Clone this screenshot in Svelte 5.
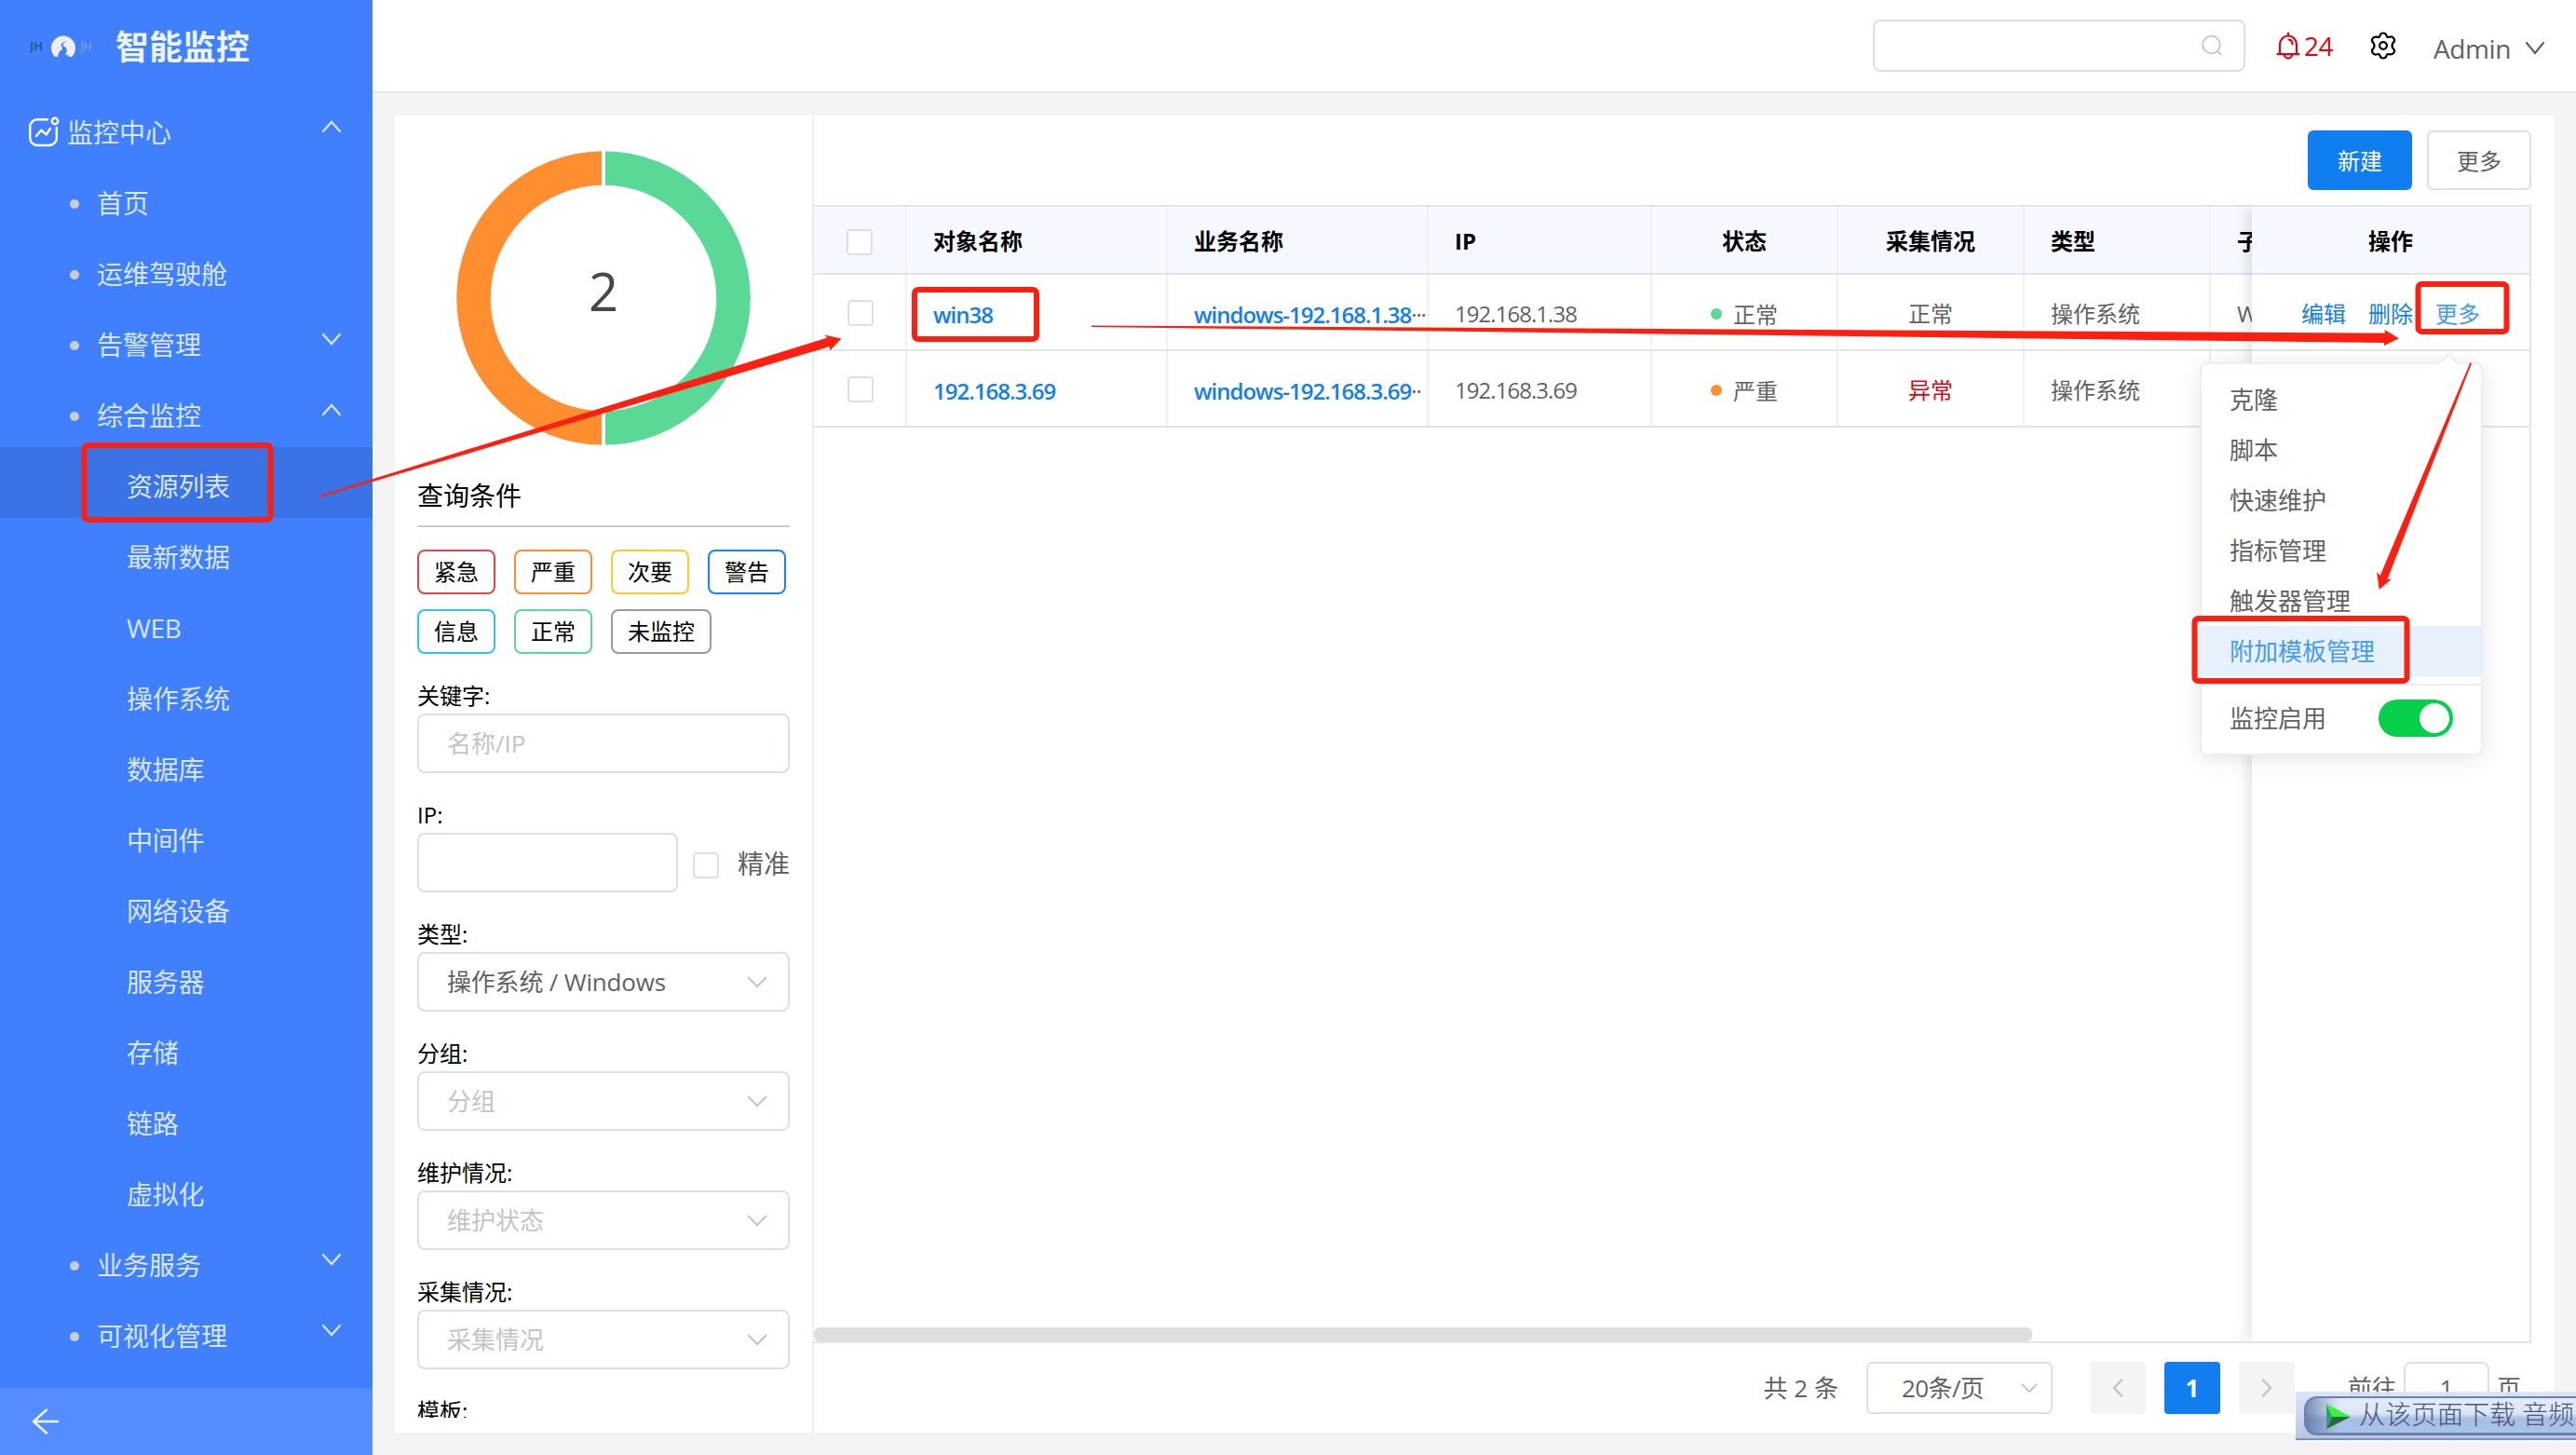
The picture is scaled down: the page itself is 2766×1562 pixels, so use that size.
<script>
  const menu = [
    { label: "首页", level: 1 },
    { label: "运维驾驶舱", level: 1 },
    { label: "告警管理", level: 1, arrow: "down" },
    { label: "综合监控", level: 1, arrow: "up" },
    { label: "资源列表", level: 2 },
    { label: "最新数据", level: 2 },
    { label: "WEB", level: 2 },
    { label: "操作系统", level: 2 },
    { label: "数据库", level: 2 },
    { label: "中间件", level: 2 },
    { label: "网络设备", level: 2 },
    { label: "服务器", level: 2 },
    { label: "存储", level: 2 },
    { label: "链路", level: 2 },
    { label: "虚拟化", level: 2 },
    { label: "业务服务", level: 1, arrow: "down" },
    { label: "可视化管理", level: 1, arrow: "down" }
  ];

  const levels = [
    { label: "紧急", color: "#e64545" },
    { label: "严重", color: "#ff8e30" },
    { label: "次要", color: "#ffcb29" },
    { label: "警告", color: "#1684fc" },
    { label: "信息", color: "#2bc4f5" },
    { label: "正常", color: "#59d896" },
    { label: "未监控", color: "#999999" }
  ];

  const selects = [
    { label: "类型:", text: "操作系统 / Windows", filled: true },
    { label: "分组:", text: "分组" },
    { label: "维护情况:", text: "维护状态" },
    { label: "采集情况:", text: "采集情况" }
  ];

  const rows = [
    { name: "win38", service: "windows-192.168.1.38", dots: "···", ip: "192.168.1.38", status: "正常", color: "#59d896", collect: "正常", type: "操作系统", sub: "W" },
    { name: "192.168.3.69", service: "windows-192.168.3.69", dots: "··", ip: "192.168.3.69", status: "严重", color: "#ff8e30", collect: "异常", type: "操作系统", sub: "" }
  ];

  const actions = ["克隆", "脚本", "快速维护", "指标管理", "触发器管理", "附加模板管理"];

  let activeMenu = "资源列表";
  let activeAction = "附加模板管理";
</script>

<div class="app">
  <aside class="sidebar">
    <div class="brand">
      <svg class="brand__logo" width="72" height="28" viewBox="0 0 72 28">
        <text x="0" y="18" class="logo-left">JH</text>
        <path fill="#eee" d="M27 25A13 13 0 1 1 45 25H42Q41 22 38 23Q42 16 37 14Q33 12 40 8Q32 10 34 14Q37 17 32 19Q30 22 30 25Z" />
        <text x="55" y="18" class="logo-right">JH</text>
      </svg>
      <span class="brand__title">智能监控</span>
    </div>

    <div class="menu__item menu__item--root">
      <svg class="menu__icon" width="34" height="34" viewBox="0 0 34 34" fill="none" stroke="#fff" stroke-width="2.4" stroke-linecap="round" stroke-linejoin="round">
        <path d="M20 3.2H9.2a8 8 0 0 0-8 8V23a8 8 0 0 0 8 8h12.6a8 8 0 0 0 8-8V12" />
        <circle cx="28" cy="5" r="3.2" />
        <path d="M8 21l5.2-6.2 5.6 4.6L23 13" />
      </svg>
      <span>监控中心</span>
      <svg class="menu__arrow" width="22" height="14" viewBox="0 0 22 14"><path d="M2 12L11 2L20 12" /></svg>
    </div>
    {#each menu as item}
      <div class="menu__item menu__item--level{item.level}" class:active={item.label === activeMenu}>
        {#if item.level === 1}<i class="menu__dot"></i>{/if}
        <span>{item.label}</span>
        {#if item.arrow}
          <svg class="menu__arrow" width="22" height="14" viewBox="0 0 22 14">
            <path d={item.arrow === "up" ? "M2 12L11 2L20 12" : "M2 2L11 12L20 2"} />
          </svg>
        {/if}
      </div>
    {/each}

    <div class="sidebar__footer">
      <svg width="30" height="28" viewBox="0 0 30 28" fill="none" stroke="#f2f6ff" stroke-width="2.4" stroke-linecap="round" stroke-linejoin="round">
        <path d="M28 14H2M16 1.5L2 14L16 26.5" />
      </svg>
    </div>
  </aside>

  <div class="page">
    <header class="topbar">
      <div class="search">
        <svg width="24" height="24" viewBox="0 0 24 24" fill="none" stroke="#c0c4cc" stroke-width="1.8" stroke-linecap="round">
          <circle cx="11.5" cy="11" r="9.3" /><path d="M18 18l4 3.6" />
        </svg>
      </div>
      <div class="alarm">
        <svg width="26" height="30" viewBox="0 0 26 30" fill="none" stroke="#e60012" stroke-width="2.2" stroke-linecap="round" stroke-linejoin="round">
          <path d="M13 1.5V4M1.5 24.2H24.500M4 24V14a9 9.500 0 0 1 18 0v10M9 25a4 3.600 0 0 0 8 0M13.500 8.500q4 .5 4 5" />
        </svg>
        <span>24</span>
      </div>
      <svg class="gear" width="30" height="30" viewBox="0 0 30 30" fill="none" stroke="#000" stroke-width="2.2" stroke-linejoin="round">
        <path d="M11.500 4.200Q12 1.500 15 1.500T18.500 4.200Q19 6.500 21.500 5.700Q25 4.700 26.500 7.500T25.500 12Q23.500 15 25.500 18Q28 20 26.500 22.500T21.500 24.300Q19 23.500 18.500 25.800Q18 28.500 15 28.500T11.500 25.800Q11 23.500 8.500 24.300Q5 25.300 3.500 22.500T4.500 18Q6.500 15 4.500 12Q2 10 3.500 7.500T8.500 5.700Q11 6.500 11.500 4.200Z" />
        <circle cx="15" cy="15" r="3.900" />
      </svg>
      <div class="user">
        <span>Admin</span>
        <svg width="22" height="16" viewBox="0 0 22 16" fill="none" stroke="#606266" stroke-width="2.2" stroke-linecap="round"><path d="M2 2l9 11 9-11" /></svg>
      </div>
    </header>

    <main class="card">
      <section class="filter">
        <svg class="ring" width="400" height="396" viewBox="0 0 400 396">
          <path d="M200 56.500a139.500 139.500 0 0 1 0 279" fill="none" stroke="#59d896" stroke-width="36.500" />
          <path d="M200 335.500a139.500 139.500 0 0 1 0-279" fill="none" stroke="#ff8e30" stroke-width="36.500" />
          <path d="M200 30V362" stroke="#fff" stroke-width="4" />
          <text x="200" y="210">2</text>
        </svg>

        <h3 class="filter__title">查询条件</h3>
        <div class="tags">
          {#each levels as level}
            <span class="tag" style="border-color: {level.color}">{level.label}</span>
          {/each}
        </div>

        <div class="field">
          <span class="field__label">关键字:</span>
          <div class="field__box">名称/IP</div>
        </div>
        <div class="field">
          <span class="field__label">IP:</span>
          <div class="field__row">
            <div class="field__box field__box--ip"></div>
            <i class="checkbox"></i>
            <span class="exact">精准</span>
          </div>
        </div>
        {#each selects as item}
          <div class="field">
            <span class="field__label">{item.label}</span>
            <div class="field__box" class:filled={item.filled}>
              <span>{item.text}</span>
              <svg width="22" height="13" viewBox="0 0 22 13" fill="none" stroke="#c0c4cc" stroke-width="2" stroke-linecap="round"><path d="M1.500 1.500L11 11L20.500 1.500" /></svg>
            </div>
          </div>
        {/each}
        <div class="field field--cut">
          <span class="field__label">模板:</span>
        </div>
      </section>

      <section class="content">
        <div class="toolbar">
          <button class="btn btn--primary">新建</button>
          <button class="btn">更多</button>
        </div>

        <div class="table">
          <div class="table__scroll">
            <div class="table__row table__row--head">
              <div class="cell cell--check"><i class="checkbox"></i></div>
              <div class="cell">对象名称</div>
              <div class="cell">业务名称</div>
              <div class="cell">IP</div>
              <div class="cell cell--center">状态</div>
              <div class="cell cell--center">采集情况</div>
              <div class="cell">类型</div>
              <div class="cell">子</div>
            </div>
            {#each rows as row}
              <div class="table__row">
                <div class="cell cell--check cell--body-check"><i class="checkbox"></i></div>
                <div class="cell"><a class="link">{row.name}</a></div>
                <div class="cell"><a class="link">{row.service}</a><span class="dots">{row.dots}</span></div>
                <div class="cell num">{row.ip}</div>
                <div class="cell cell--center">
                  <i class="status" style="background: {row.color}"></i><span class="status__text">{row.status}</span>
                </div>
                <div class="cell cell--center" class:danger={row.collect === "异常"}>{row.collect}</div>
                <div class="cell">{row.type}</div>
                <div class="cell">{row.sub}</div>
              </div>
            {/each}
            <div class="scrollbar"></div>
          </div>
          <div class="table__fixed">
            <div class="ops ops--head">操作</div>
            <div class="ops"><a>编辑</a><a>删除</a><a class="hover">更多</a></div>
            <div class="ops"></div>
          </div>
        </div>

        <div class="pager">
          <span>共 2 条</span>
          <div class="pager__size">
            <span>20条/页</span>
            <svg width="18" height="11" viewBox="0 0 18 11" fill="none" stroke="#c0c4cc" stroke-width="1.800" stroke-linecap="round"><path d="M1.500 1.500L9 9L16.500 1.500" /></svg>
          </div>
          <button class="pager__btn"><svg width="14" height="20" viewBox="0 0 14 20"><path d="M11 1.500L3 10L11 18.500" /></svg></button>
          <button class="pager__btn current">1</button>
          <button class="pager__btn"><svg width="14" height="20" viewBox="0 0 14 20"><path d="M3 1.500L11 10L3 18.500" /></svg></button>
          <span class="pager__goto">前往</span>
          <div class="pager__input">1</div>
          <span>页</span>
        </div>
      </section>
    </main>
  </div>

  <!-- row actions dropdown -->
  <div class="dropdown">
    <svg class="dropdown__tip" width="24" height="14" viewBox="0 0 24 14"><path d="M1 13L12 2L23 13" fill="#fff" stroke="#ebeef5" stroke-width="2" /></svg>
    {#each actions as action}
      <div class="dropdown__item" class:active={action === activeAction}>{action}</div>
    {/each}
    <div class="dropdown__switch">
      <span>监控启用</span>
      <i class="switch"></i>
    </div>
  </div>

  <div class="downloader">
    <div class="downloader__inner">
      <svg width="30" height="30" viewBox="0 0 30 30">
        <path d="M2 2L28 16L8 16Z" fill="#35f53a" />
        <path d="M8 16H28L2 29Z" fill="#27693a" />
        <path d="M2 2L8 16L2 29Z" fill="#3a9a72" />
      </svg>
      <span>从该页面下载 音频</span>
    </div>
  </div>

  <!-- step markers -->
  <svg class="marks" width="2766" height="1562" viewBox="0 0 2766 1562">
    <g fill="none" stroke="#ff1f10" stroke-width="6">
      <rect x="90.500" y="478" width="200" height="80" rx="4" />
      <rect x="982" y="311" width="131" height="53" rx="4" />
      <rect x="2596.500" y="305" width="95" height="51" rx="4" />
      <rect x="2356.500" y="664" width="228" height="67" rx="4" />
    </g>
    <g fill="#ff1f10">
      <path d="M343 532L888.500 362.500L885 359.500L903.500 363.500L891 376.500V372L343 534Z" />
      <path d="M1172 349.500L2561 357.500L2560.500 354L2576 363.200L2560 371V368L1172 351Z" />
      <path d="M2652.500 389L2555.700 618L2552 614L2554.700 633L2568 621.500L2563.500 622L2654 390Z" />
    </g>
  </svg>
</div>

<style>
  :global(body) {
    margin: 0;
  }

  .app {
    position: relative;
    display: flex;
    width: 2766px;
    height: 1562px;
    overflow: hidden;
    background: #f4f4f4;
    font-family: "Open Sans", "Noto Sans CJK SC", sans-serif;
    font-size: 24px;
    line-height: 36px;
    color: #606266;
  }

  .app * {
    box-sizing: border-box;
  }

  svg {
    flex-shrink: 0;
  }

  /* sidebar */
  .sidebar {
    display: flex;
    flex-direction: column;
    width: 400px;
    flex-shrink: 0;
    background: #4080ff;
    color: #d9e6ff;
    font-size: 28px;
  }

  .brand {
    display: flex;
    align-items: center;
    height: 100px;
    padding-left: 32px;
  }

  .logo-left {
    font: bold 13px "Open Sans", sans-serif;
    fill: #1b6196;
  }

  .logo-right {
    font: 300 12px "Open Sans", sans-serif;
    fill: #a3c0f5;
  }

  .brand__title {
    margin: 2px 0 0 20px;
    font-size: 36px;
    font-weight: bold;
    color: #ecf3ff;
    line-height: 50px;
  }

  .menu__item {
    display: flex;
    align-items: center;
    height: 76px;
    flex-shrink: 0;
    padding: 8px 33px 0 0;
  }

  .menu__item--root {
    padding-left: 31px;
  }

  .menu__icon {
    margin-right: 7px;
  }

  .menu__item--level1 {
    padding-left: 75px;
  }

  .menu__item--level2 {
    padding-left: 136px;
    letter-spacing: -0.3px;
  }

  .menu__item.active {
    background: #3a73e6;
  }

  .menu__dot {
    width: 10px;
    height: 10px;
    margin: 2px 19px 0 0;
    border-radius: 50%;
    background: #ccc;
  }

  .menu__arrow {
    margin: 0 0 12px auto;
    fill: none;
    stroke: #d9e6ff;
    stroke-width: 2.2;
    stroke-linecap: round;
  }

  .sidebar__footer {
    display: flex;
    align-items: center;
    height: 72px;
    margin-top: auto;
    padding-left: 34px;
    background: #538dff;
  }

  /* top bar */
  .page {
    flex: 1;
    display: flex;
    flex-direction: column;
  }

  .topbar {
    display: flex;
    align-items: center;
    justify-content: flex-end;
    height: 100px;
    padding-right: 33px;
    background: #fff;
    border-bottom: 2px solid #e6e6e6;
    font-size: 28px;
  }

  .search {
    display: flex;
    align-items: center;
    justify-content: flex-end;
    width: 400px;
    height: 56px;
    padding-right: 22px;
    border: 2px solid #dcdfe6;
    border-radius: 8px;
  }

  .alarm {
    display: flex;
    align-items: center;
    width: 62px;
    margin-left: 33px;
    gap: 4px;
    color: #e60012;
    letter-spacing: -0.6px;
  }

  .gear {
    margin-left: 38px;
  }

  .user {
    display: flex;
    align-items: center;
    justify-content: space-between;
    width: 120px;
    margin: 6px 0 0 39px;
    letter-spacing: -0.4px;
  }

  /* card */
  .card {
    flex: 1;
    display: flex;
    margin: 24px;
    background: #fff;
  }

  .filter {
    width: 450px;
    padding: 0 24px;
    border-right: 2px solid #ebeef5;
    color: #000;
  }

  .ring {
    display: block;
    width: 400px;
  }

  .ring text {
    font-size: 56px;
    fill: #464646;
    text-anchor: middle;
  }

  .filter__title {
    height: 46px;
    margin: 0 0 24px;
    border-bottom: 2px solid #ccc;
    font-size: 28px;
    font-weight: normal;
    line-height: 25px;
  }

  .tags {
    display: flex;
    flex-wrap: wrap;
    gap: 16px 20px;
    margin-right: -4px;
    margin-bottom: 28px;
  }

  .tag {
    height: 48px;
    padding: 0 16px;
    border: 2px solid;
    border-radius: 8px;
    line-height: 44px;
  }

  .field {
    height: 128px;
  }

  .field--cut {
    height: 24px;
    overflow: hidden;
  }

  .field__label {
    display: block;
    height: 36px;
    line-height: 34px;
  }

  .field__box {
    display: flex;
    align-items: center;
    justify-content: space-between;
    width: 400px;
    height: 64px;
    padding: 0 22px 0 30px;
    border: 2px solid #dcdfe6;
    border-radius: 8px;
    font-size: 26px;
    color: #c0c4cc;
  }

  .field__box.filled {
    color: #606266;
    letter-spacing: -0.2px;
  }

  .field__box--ip {
    width: 280px;
    margin-right: 16px;
  }

  .field__row {
    display: flex;
    align-items: center;
  }

  .checkbox {
    display: block;
    width: 28px;
    height: 28px;
    flex-shrink: 0;
    border: 2px solid #dcdfe6;
    border-radius: 4px;
    background: #fff;
  }

  .field__row .checkbox {
    margin-top: 6px;
  }

  .exact {
    margin: 2px 0 0 20px;
    font-size: 28px;
    color: #606266;
  }

  /* right side */
  .content {
    flex: 1;
    display: flex;
    flex-direction: column;
    min-width: 0;
  }

  .toolbar {
    display: flex;
    justify-content: flex-end;
    align-items: center;
    gap: 16px;
    height: 96px;
    padding-right: 24px;
  }

  .btn {
    width: 112px;
    height: 64px;
    padding: 2px 0 0;
    border: 2px solid #dcdfe6;
    border-radius: 6px;
    background: #fff;
    font: inherit;
    color: #606266;
  }

  .btn--primary {
    border-color: #107eef;
    background: #107eef;
    color: #fff;
  }

  .table {
    display: flex;
    height: 1222px;
    margin-right: 24px;
    border: solid #e4e4e4;
    border-width: 2px 2px 2px 0;
  }

  .table__scroll {
    display: flex;
    flex-direction: column;
    width: 1544px;
    overflow: hidden;
  }

  .table__row {
    display: grid;
    grid-template-columns: 100px 280px 280px 240px 200px 200px 200px 280px;
    height: 82px;
    border-bottom: 2px solid #e4e4e4;
  }

  .table__row--head {
    height: 73px;
    background: #f5f8ff;
    color: #000;
    font-weight: bold;
  }

  .cell {
    display: flex;
    align-items: center;
    padding: 3px 0 0 28px;
    border-right: 2px solid #f0f0f0;
    white-space: nowrap;
    overflow: hidden;
  }

  .cell--center {
    justify-content: center;
    padding: 3px 0 0;
  }

  .cell--check {
    justify-content: center;
    padding: 4px 0 0;
  }

  .cell--body-check {
    padding: 2px 0 0 2px;
  }

  .link {
    margin-top: 3px;
    font-weight: 600;
    color: #107eef;
    letter-spacing: -1px;
  }

  .dots {
    margin-top: 3px;
    letter-spacing: -1.2px;
  }

  .num {
    letter-spacing: -0.95px;
  }

  .status {
    width: 12px;
    height: 12px;
    margin-right: 12px;
    border-radius: 50%;
  }

  .status__text {
    margin-top: 3px;
  }

  .danger {
    color: #e60012;
  }

  .scrollbar {
    width: 1308px;
    height: 15px;
    margin-top: auto;
    border-radius: 6px;
    background: #dddee0;
  }

  .table__fixed {
    flex: 1;
    z-index: 1;
    background: #fff;
    box-shadow: -4px 0 16px rgba(0, 0, 0, 0.12);
    clip-path: inset(0 0 0 -30px);
  }

  .ops {
    display: flex;
    align-items: center;
    justify-content: center;
    gap: 24px;
    height: 82px;
    padding-top: 3px;
    border-bottom: 2px solid #e4e4e4;
    color: #107eef;
  }

  .ops--head {
    height: 73px;
    background: #f5f8ff;
    color: #000;
    font-weight: bold;
  }

  .ops .hover {
    color: #459bf2;
  }

  .pager {
    display: flex;
    align-items: center;
    justify-content: flex-end;
    height: 56px;
    margin: 20px 35px 0 0;
    font-size: 26px;
  }

  .pager__size {
    display: flex;
    align-items: center;
    justify-content: space-between;
    width: 200px;
    height: 56px;
    margin: 0 40px 0 30px;
    padding: 0 14px 0 36px;
    border: 2px solid #dcdfe6;
    border-radius: 6px;
    letter-spacing: -0.6px;
  }

  .pager__btn {
    display: flex;
    align-items: center;
    justify-content: center;
    width: 60px;
    height: 56px;
    margin-right: 20px;
    border: none;
    border-radius: 4px;
    background: #f4f4f5;
    font: bold 26px "Open Sans", sans-serif;
  }

  .pager__btn path {
    fill: none;
    stroke: #c0c4cc;
    stroke-width: 2.4;
    stroke-linecap: round;
  }

  .pager__btn.current {
    background: #107eef;
    color: #fff;
  }

  .pager__goto {
    margin-left: 37px;
  }

  .pager__input {
    width: 92px;
    height: 56px;
    margin: 0 8px;
    border: 2px solid #dcdfe6;
    border-radius: 8px;
    line-height: 52px;
    text-align: center;
  }

  /* dropdown */
  .dropdown {
    position: absolute;
    left: 2362px;
    top: 389px;
    z-index: 2;
    width: 304px;
    height: 422px;
    padding-top: 11px;
    border: 2px solid #ebeef5;
    border-radius: 8px;
    background: #fff;
    box-shadow: 0 4px 24px rgba(0, 0, 0, 0.1);
    font-size: 26px;
  }

  .dropdown__tip {
    position: absolute;
    left: 253px;
    top: -13px;
  }

  .dropdown__item {
    height: 54px;
    padding-left: 30px;
    line-height: 54px;
  }

  .dropdown__item.active {
    background: #e7f1fc;
    color: #459bf2;
  }

  .dropdown__switch {
    display: flex;
    align-items: center;
    justify-content: space-between;
    height: 72px;
    margin-top: 8px;
    padding: 0 30px;
    border-top: 2px solid #ebeef5;
  }

  .switch {
    width: 80px;
    height: 40px;
    padding: 4px 4px 4px 44px;
    border-radius: 20px;
    background: #06d04a;
  }

  .switch::after {
    content: "";
    display: block;
    width: 32px;
    height: 32px;
    border-radius: 50%;
    background: #fff;
  }

  .downloader {
    position: absolute;
    left: 2465px;
    top: 1494px;
    z-index: 3;
    width: 301px;
    height: 52px;
    padding: 5px 0 5px 9px;
    border-bottom: 2px solid #7b90b5;
    background: linear-gradient(rgba(214, 228, 255, 0.9), rgba(182, 195, 218, 0.95));
  }

  .downloader__inner {
    display: flex;
    align-items: center;
    height: 42px;
    padding-left: 20px;
    border: solid #6c80b4;
    border-width: 2px 0 3px 2px;
    border-radius: 14px 0 0 14px;
    background:
      linear-gradient(90deg, rgba(86, 110, 160, 0.75), rgba(255, 255, 255, 0) 36px),
      linear-gradient(#e3ebf7, #dbe6f6 45%, #a6bde4 60%, #abc3ea);
    font-size: 28px;
    color: #47547c;
    white-space: nowrap;
  }

  .downloader__inner span {
    margin-left: 7px;
    font-family: "Liberation Serif", "Noto Sans CJK SC", serif;
    font-weight: 300;
  }

  .marks {
    position: absolute;
    left: 0;
    top: 0;
    z-index: 4;
    pointer-events: none;
  }
</style>
